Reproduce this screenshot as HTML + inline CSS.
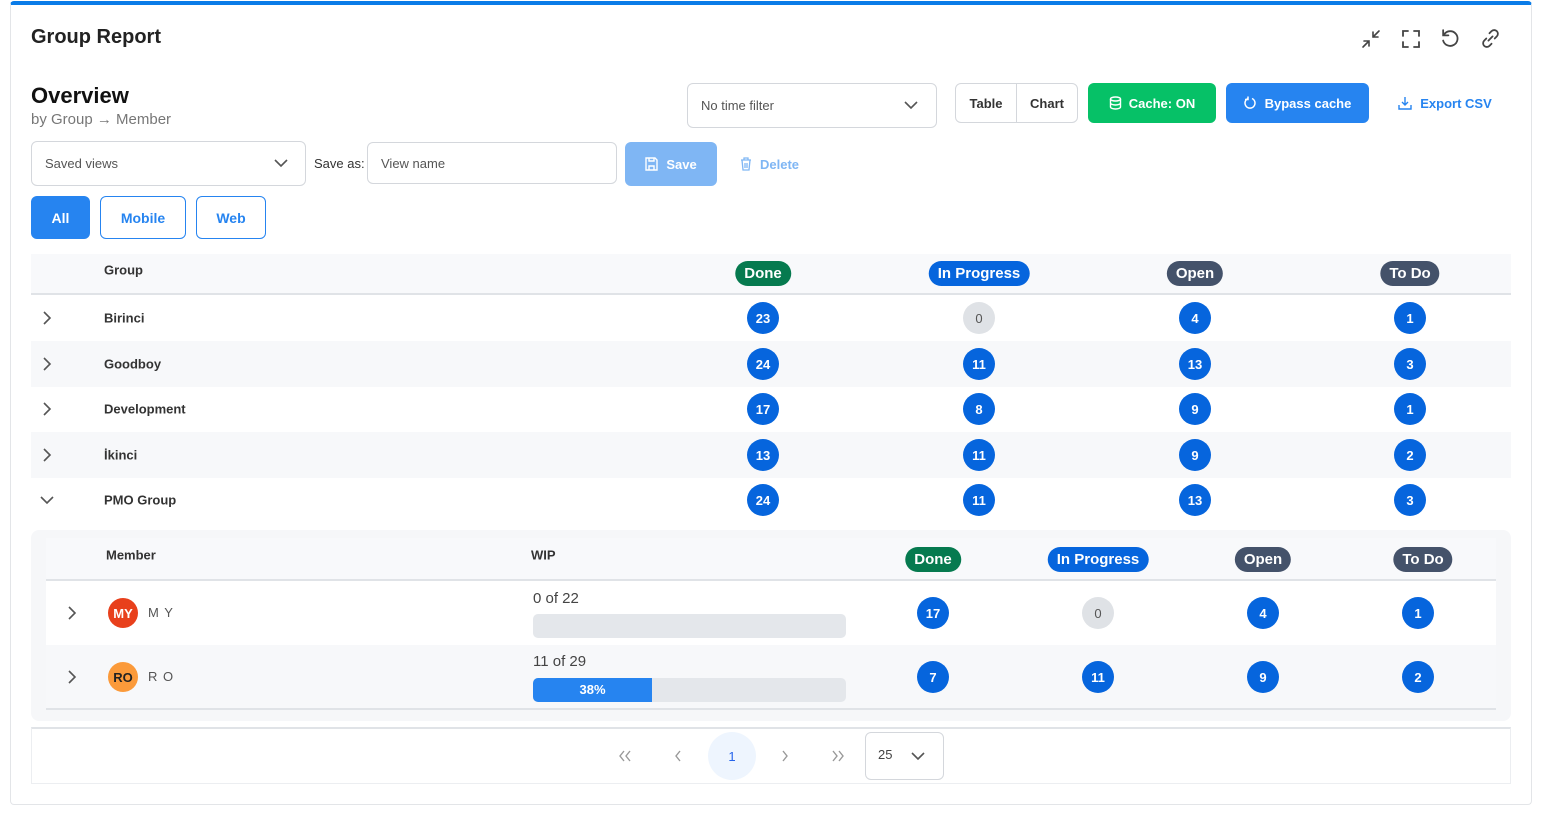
<!DOCTYPE html>
<html><head><meta charset="utf-8"><style>
*{box-sizing:border-box;margin:0;padding:0}
body{width:1543px;height:813px;background:#fff;font-family:"Liberation Sans",sans-serif;position:relative;overflow:hidden;color:#1f2937}
.a{position:absolute}
.card{left:10px;top:1px;width:1522px;height:804px;border:1px solid #e3e5e8;border-top:4px solid #0a7ce8;border-radius:4px}
.btn{position:absolute;display:flex;align-items:center;justify-content:center;font-size:13px;font-weight:bold;border-radius:6px}
.inp{position:absolute;border:1px solid #d4d7dc;border-radius:6px;font-size:13px;color:#555;display:flex;align-items:center;padding-left:13px}
.pill{position:absolute;transform:translateX(-50%);color:#fff;font-weight:bold;font-size:15px;padding:0 9px;height:25px;line-height:25px;border-radius:13px;white-space:nowrap}
.c{position:absolute;width:32px;height:32px;margin-left:-16px;margin-top:-16px;border-radius:50%;background:#0665dd;color:#fff;font-size:13px;font-weight:bold;display:flex;align-items:center;justify-content:center}
.c.z{background:#dfe2e6;color:#555;font-weight:normal}
.lbl{position:absolute;font-size:13px;font-weight:bold;color:#333;transform:translateY(-50%)}
.chev{position:absolute;transform:translate(-50%,-50%)}
</style></head><body>
<div class="a card"></div>
<div class="a" style="left:31px;top:26px;font-size:20px;font-weight:bold;color:#222">Group Report</div>
<svg class="a" style="left:1361px;top:29px" width="20" height="20" viewBox="0 0 20 20" fill="none" stroke="#444" stroke-width="1.6" stroke-linecap="round"><path d="M2 18l6-6M3 12h5v5M18 2l-6 6M12 3v5h5"/></svg>
<svg class="a" style="left:1401px;top:29px" width="20" height="20" viewBox="0 0 20 20" fill="none" stroke="#444" stroke-width="1.8" stroke-linecap="round"><path d="M2 7V2h5M13 2h5v5M18 13v5h-5M7 18H2v-5"/></svg>
<svg class="a" style="left:1440px;top:28px" width="21" height="21" viewBox="0 0 20 20" fill="none" stroke="#444" stroke-width="1.7" stroke-linecap="round"><path d="M4 6a7 7 0 1 1-1 6"/><path d="M3 2v5h5"/></svg>
<svg class="a" style="left:1480px;top:28px" width="21" height="21" viewBox="0 0 20 20" fill="none" stroke="#444" stroke-width="1.7" stroke-linecap="round"><path d="M8 12l4-4M9 5l2-2a3.5 3.5 0 0 1 5 5l-2 2M11 15l-2 2a3.5 3.5 0 0 1-5-5l2-2"/></svg>

<div class="a" style="left:31px;top:83px;font-size:22px;font-weight:bold;color:#111">Overview</div>
<div class="a" style="left:31px;top:111px;font-size:15px;color:#777">by Group → Member</div>

<div class="inp" style="left:687px;top:83px;width:250px;height:45px">No time filter</div>
<svg class="a" style="left:903px;top:99px" width="16" height="12" viewBox="0 0 16 12" fill="none" stroke="#555" stroke-width="1.6"><path d="M2 3l6 6 6-6"/></svg>
<div class="a" style="left:955px;top:83px;width:123px;height:40px;border:1px solid #d4d7dc;border-radius:6px"></div>
<div class="a" style="left:1016px;top:84px;width:1px;height:38px;background:#d4d7dc"></div>
<div class="btn" style="left:956px;top:84px;width:60px;height:38px;color:#333">Table</div>
<div class="btn" style="left:1017px;top:84px;width:60px;height:38px;color:#333">Chart</div>
<div class="btn" style="left:1088px;top:83px;width:128px;height:40px;background:#06c167;color:#fff">
<svg width="13" height="14" viewBox="0 0 13 14" fill="none" stroke="#fff" stroke-width="1.4" style="margin-right:7px"><ellipse cx="6.5" cy="3" rx="5" ry="2"/><path d="M1.5 3v8c0 1.1 2.2 2 5 2s5-.9 5-2V3M1.5 7c0 1.1 2.2 2 5 2s5-.9 5-2"/></svg>Cache: ON</div>
<div class="btn" style="left:1226px;top:83px;width:143px;height:40px;background:#2684f0;color:#fff">
<svg width="13" height="14" viewBox="0 0 13 14" fill="none" stroke="#fff" stroke-width="1.5" style="margin-right:8px"><path d="M4 2.5a5 5 0 1 0 4 0"/><path d="M4 0.5v3H1"/></svg>Bypass cache</div>
<div class="btn" style="left:1390px;top:83px;width:110px;height:40px;color:#2684f0">
<svg width="14" height="14" viewBox="0 0 14 14" fill="none" stroke="#2684f0" stroke-width="1.4" style="margin-right:8px"><path d="M7 1v8M4 6l3 3 3-3M1 9v4h12V9"/></svg>Export CSV</div>

<div class="inp" style="left:31px;top:141px;width:275px;height:45px">Saved views</div>
<svg class="a" style="left:273px;top:157px" width="16" height="12" viewBox="0 0 16 12" fill="none" stroke="#555" stroke-width="1.6"><path d="M2 3l6 6 6-6"/></svg>
<div class="a" style="left:314px;top:156px;font-size:13px;color:#333">Save as:</div>
<div class="inp" style="left:367px;top:142px;width:250px;height:42px">View name</div>
<div class="btn" style="left:625px;top:142px;width:92px;height:44px;background:#7fb6f4;color:#fff">
<svg width="13" height="14" viewBox="0 0 13 14" fill="none" stroke="#fff" stroke-width="1.4" style="margin-right:8px"><path d="M1 1h9l2 2v10H1z"/><path d="M4 1v3h5V1M4 13V9h5v4"/></svg>Save</div>
<div class="btn" style="left:737px;top:142px;width:65px;height:44px;color:#7fb6f4">
<svg width="12" height="14" viewBox="0 0 12 14" fill="none" stroke="#7fb6f4" stroke-width="1.3" style="margin-right:8px"><path d="M1 3h10M4 3V1h4v2M2 3l1 10h6l1-10M5 6v5M7 6v5"/></svg>Delete</div>

<div class="btn" style="left:31px;top:196px;width:59px;height:43px;background:#2684f0;color:#fff;font-size:14px">All</div>
<div class="btn" style="left:100px;top:196px;width:86px;height:43px;border:1px solid #2684f0;color:#2684f0;font-size:14px">Mobile</div>
<div class="btn" style="left:196px;top:196px;width:70px;height:43px;border:1px solid #2684f0;color:#2684f0;font-size:14px">Web</div>

<div class="a" style="left:31px;top:254px;width:1480px;height:41px;background:#f8f9fb;border-bottom:2px solid #e0e3e7"></div>
<div class="lbl" style="left:104px;top:270px">Group</div>
<div class="pill" style="left:763px;top:261px;background:#067a4f">Done</div>
<div class="pill" style="left:979px;top:261px;background:#0665dd">In Progress</div>
<div class="pill" style="left:1195px;top:261px;background:#44526a">Open</div>
<div class="pill" style="left:1410px;top:261px;background:#44526a">To Do</div>

<div class="a" style="left:31px;top:341px;width:1480px;height:46px;background:#f7f8fa"></div>
<div class="a" style="left:31px;top:432px;width:1480px;height:46px;background:#f7f8fa"></div>

<svg class="chev" style="left:47px;top:318px" width="10" height="16" viewBox="0 0 10 16" fill="none" stroke="#555" stroke-width="1.6"><path d="M2 2l6 6-6 6"/></svg>
<svg class="chev" style="left:47px;top:364px" width="10" height="16" viewBox="0 0 10 16" fill="none" stroke="#555" stroke-width="1.6"><path d="M2 2l6 6-6 6"/></svg>
<svg class="chev" style="left:47px;top:409px" width="10" height="16" viewBox="0 0 10 16" fill="none" stroke="#555" stroke-width="1.6"><path d="M2 2l6 6-6 6"/></svg>
<svg class="chev" style="left:47px;top:455px" width="10" height="16" viewBox="0 0 10 16" fill="none" stroke="#555" stroke-width="1.6"><path d="M2 2l6 6-6 6"/></svg>
<svg class="chev" style="left:47px;top:500px" width="16" height="10" viewBox="0 0 16 10" fill="none" stroke="#555" stroke-width="1.6"><path d="M2 2l6 6 6-6"/></svg>

<div class="lbl" style="left:104px;top:318px">Birinci</div>
<div class="lbl" style="left:104px;top:364px">Goodboy</div>
<div class="lbl" style="left:104px;top:409px">Development</div>
<div class="lbl" style="left:104px;top:455px">İkinci</div>
<div class="lbl" style="left:104px;top:500px">PMO Group</div>

<div class="c" style="left:763px;top:318px">23</div><div class="c z" style="left:979px;top:318px">0</div><div class="c" style="left:1195px;top:318px">4</div><div class="c" style="left:1410px;top:318px">1</div>
<div class="c" style="left:763px;top:364px">24</div><div class="c" style="left:979px;top:364px">11</div><div class="c" style="left:1195px;top:364px">13</div><div class="c" style="left:1410px;top:364px">3</div>
<div class="c" style="left:763px;top:409px">17</div><div class="c" style="left:979px;top:409px">8</div><div class="c" style="left:1195px;top:409px">9</div><div class="c" style="left:1410px;top:409px">1</div>
<div class="c" style="left:763px;top:455px">13</div><div class="c" style="left:979px;top:455px">11</div><div class="c" style="left:1195px;top:455px">9</div><div class="c" style="left:1410px;top:455px">2</div>
<div class="c" style="left:763px;top:500px">24</div><div class="c" style="left:979px;top:500px">11</div><div class="c" style="left:1195px;top:500px">13</div><div class="c" style="left:1410px;top:500px">3</div>

<div class="a" style="left:31px;top:530px;width:1480px;height:191px;background:#f6f7f9;border-radius:8px"></div>
<div class="a" style="left:46px;top:538px;width:1450px;height:43px;background:#f8f9fb;border-bottom:2px solid #e0e3e7"></div>
<div class="a" style="left:46px;top:581px;width:1450px;height:64px;background:#fff"></div>
<div class="a" style="left:46px;top:645px;width:1450px;height:65px;background:#f7f8fa;border-bottom:2px solid #e0e3e7"></div>
<div class="lbl" style="left:106px;top:555px">Member</div>
<div class="lbl" style="left:531px;top:555px">WIP</div>
<div class="pill" style="left:933px;top:547px;background:#067a4f">Done</div>
<div class="pill" style="left:1098px;top:547px;background:#0665dd">In Progress</div>
<div class="pill" style="left:1263px;top:547px;background:#44526a">Open</div>
<div class="pill" style="left:1423px;top:547px;background:#44526a">To Do</div>

<svg class="chev" style="left:72px;top:613px" width="10" height="16" viewBox="0 0 10 16" fill="none" stroke="#555" stroke-width="1.6"><path d="M2 2l6 6-6 6"/></svg>
<svg class="chev" style="left:72px;top:677px" width="10" height="16" viewBox="0 0 10 16" fill="none" stroke="#555" stroke-width="1.6"><path d="M2 2l6 6-6 6"/></svg>
<div class="c" style="left:123px;top:613px;width:30px;height:30px;margin-left:-15px;margin-top:-15px;background:#e8401c;font-size:13px">MY</div>
<div class="c" style="left:123px;top:677px;width:30px;height:30px;margin-left:-15px;margin-top:-15px;background:#fb9a3a;color:#222;font-size:13px">RO</div>
<div class="a" style="left:148px;top:605px;font-size:13px;color:#555;letter-spacing:1px">M Y</div>
<div class="a" style="left:148px;top:669px;font-size:13px;color:#555;letter-spacing:1px">R O</div>
<div class="a" style="left:533px;top:590px;font-size:15px;color:#444">0 of 22</div>
<div class="a" style="left:533px;top:614px;width:313px;height:24px;background:#e4e7eb;border-radius:5px"></div>
<div class="a" style="left:533px;top:653px;font-size:15px;color:#444">11 of 29</div>
<div class="a" style="left:533px;top:678px;width:313px;height:24px;background:#e4e7eb;border-radius:5px;overflow:hidden"><div style="width:119px;height:24px;background:#2684f0;color:#fff;font-size:13px;font-weight:bold;text-align:center;line-height:24px">38%</div></div>

<div class="c" style="left:933px;top:613px">17</div><div class="c z" style="left:1098px;top:613px">0</div><div class="c" style="left:1263px;top:613px">4</div><div class="c" style="left:1418px;top:613px">1</div>
<div class="c" style="left:933px;top:677px">7</div><div class="c" style="left:1098px;top:677px">11</div><div class="c" style="left:1263px;top:677px">9</div><div class="c" style="left:1418px;top:677px">2</div>

<div class="a" style="left:31px;top:727px;width:1480px;height:57px;border:1px solid #eceef1;border-top:2px solid #e0e3e7"></div>
<svg class="chev" style="left:625px;top:756px" width="16" height="14" viewBox="0 0 16 14" fill="none" stroke="#999" stroke-width="1.4"><path d="M7 2L3 7l4 5M13 2L9 7l4 5"/></svg>
<svg class="chev" style="left:678px;top:756px" width="10" height="14" viewBox="0 0 10 14" fill="none" stroke="#999" stroke-width="1.4"><path d="M7 2L3 7l4 5"/></svg>
<div class="a" style="left:708px;top:732px;width:48px;height:48px;border-radius:50%;background:#eef5fe;color:#2563eb;font-size:13px;display:flex;align-items:center;justify-content:center">1</div>
<svg class="chev" style="left:785px;top:756px" width="10" height="14" viewBox="0 0 10 14" fill="none" stroke="#999" stroke-width="1.4"><path d="M3 2l4 5-4 5"/></svg>
<svg class="chev" style="left:838px;top:756px" width="16" height="14" viewBox="0 0 16 14" fill="none" stroke="#999" stroke-width="1.4"><path d="M3 2l4 5-4 5M9 2l4 5-4 5"/></svg>
<div class="a" style="left:865px;top:732px;width:79px;height:48px;border:1px solid #d4d7dc;border-radius:6px"></div>
<div class="a" style="left:878px;top:747px;font-size:13px;color:#444">25</div>
<svg class="a" style="left:910px;top:750px" width="16" height="12" viewBox="0 0 16 12" fill="none" stroke="#555" stroke-width="1.6"><path d="M2 3l6 6 6-6"/></svg>
</body></html>
